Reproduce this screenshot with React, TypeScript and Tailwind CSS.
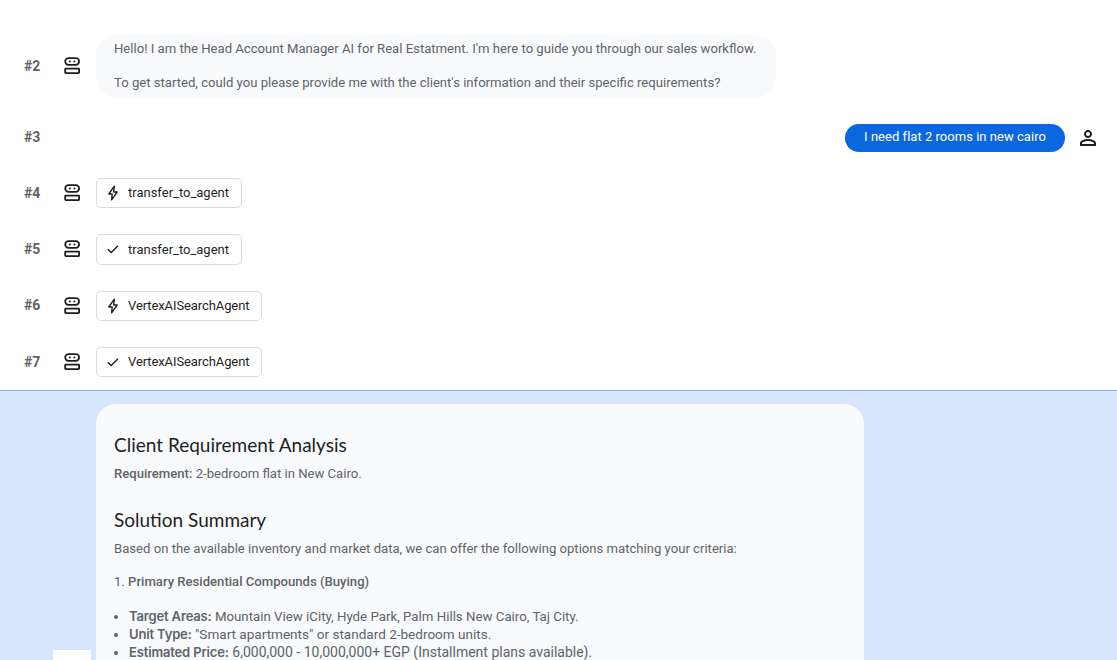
const BotIcon = () => (
  <svg width="24" height="24" viewBox="0 0 24 24" fill="none" stroke="#1f1f1f" strokeWidth="1.8">
    <rect x="5.2" y="4.2" width="13.9" height="6.6" rx="3.3" />
    <rect x="5.2" y="14.6" width="13.9" height="4.5" rx="0.5" />
    <circle cx="9.9" cy="7.5" r="1" fill="#1f1f1f" stroke="none" />
    <circle cx="14.4" cy="7.5" r="1" fill="#1f1f1f" stroke="none" />
  </svg>
);

const UserIcon = () => (
  <svg width="24" height="24" viewBox="0 0 24 24" fill="#1f1f1f">
    <path d="M12 6c1.1 0 2 .9 2 2s-.9 2-2 2-2-.9-2-2 .9-2 2-2m0 9c2.7 0 5.8 1.29 6 2v1H6v-.99c.2-.72 3.3-2.01 6-2.01M12 4C9.79 4 8 5.79 8 8s1.79 4 4 4 4-1.79 4-4-1.79-4-4-4zm0 9c-2.67 0-8 1.34-8 4v3h16v-3c0-2.66-5.33-4-8-4z" />
  </svg>
);

const BoltIcon = () => (
  <svg width="16" height="16" viewBox="0 0 16 16" fill="none" stroke="#1f1f1f" strokeWidth="1.4" strokeLinejoin="round">
    <path d="M9.3 1.2 3.8 9h3.4l-.6 5.8L12.2 7H8.7z" />
  </svg>
);

const CheckIcon = () => (
  <svg width="16" height="16" viewBox="0 0 16 16" fill="none" stroke="#1f1f1f" strokeWidth="1.4">
    <path d="M2.8 8.2 6.2 11.6 13 4.8" />
  </svg>
);

const Chip = ({ done, label, className }: { done?: boolean; label: string; className: string }) => (
  <div className={`flex h-[30.33px] items-center gap-[7px] rounded-[5px] border border-[#dadce0] bg-white pl-2 text-[13px] font-[450] text-[#1f1f1f] ${className}`}>
    {done ? <CheckIcon /> : <BoltIcon />}
    <span>{label}</span>
  </div>
);

const Row = ({ index, children, bot = true, last }: { index: string; children?: React.ReactNode; bot?: boolean; last?: boolean }) => (
  <div className={`flex items-center pt-[13px] pl-6 pr-[17px] ${last ? 'pb-[14px]' : 'pb-[13px]'}`}>
    <span className={`w-[36px] text-[14px] font-bold text-[#5f6368] ${bot ? '' : 'pb-[2px]'}`}>{index}</span>
    <div className="flex w-[36px] shrink-0 justify-start">{bot && <BotIcon />}</div>
    {children}
  </div>
);

export default function App() {
  return (
    <div className="h-[660px] overflow-hidden bg-white font-['Roboto',sans-serif]">
      <div className="pt-[22px]">
        <Row index="#2" last>
          <div className="h-[62px] w-[680px] rounded-[20px] bg-[#f8fafc] px-[18px] pt-[5px] text-[13.12px] leading-[17px] text-[#5f6368]">
            <p className="pb-[17px]">Hello! I am the Head Account Manager AI for Real Estatment. I'm here to guide you through our sales workflow.</p>
            <p>To get started, could you please provide me with the client's information and their specific requirements?</p>
          </div>
        </Row>
        <Row index="#3" bot={false}>
          <div className="ml-auto flex items-center gap-[11px]">
            <div className="flex h-[28px] w-[220px] items-center justify-center rounded-[14px] bg-[#0b67e0] pb-[2px] text-[13px] font-[450] tracking-[0.03px] text-white">
              I need flat 2 rooms in new cairo
            </div>
            <UserIcon />
          </div>
        </Row>
        <Row index="#4"><Chip className="w-[146px]" label="transfer_to_agent" /></Row>
        <Row index="#5"><Chip className="w-[146px]" done label="transfer_to_agent" /></Row>
        <Row index="#6"><Chip className="w-[166px] tracking-[-0.1px]" label="VertexAISearchAgent" /></Row>
        <Row index="#7"><Chip className="w-[166px] tracking-[-0.1px]" done label="VertexAISearchAgent" /></Row>
      </div>
      <div className="relative h-[270px] overflow-hidden border-t border-[#8ab4f8] bg-[#d6e5fc] pl-24 pt-[13px]">
        <div className="absolute bottom-0 left-[53px] h-[10px] w-[38px] bg-white" />
        <div className="h-[400px] w-[768px] rounded-[20px] bg-[#f8fafc] px-[18px] pt-[26px] text-[13.12px] leading-[17px] text-[#5f6368]">
          <h2 className="font-['Lato',sans-serif] text-[19px] leading-[30px] font-normal text-[#1f1f1f]">Client Requirement Analysis</h2>
          <p className="mt-[5px]"><b className="font-medium">Requirement:</b> 2-bedroom flat in New Cairo.</p>
          <h2 className="mt-[23px] font-['Lato',sans-serif] text-[19px] leading-[30px] font-normal text-[#1f1f1f]">Solution Summary</h2>
          <p className="mt-[5px]">Based on the available inventory and market data, we can offer the following options matching your criteria:</p>
          <p className="mt-[16px]">1. <b className="font-medium">Primary Residential Compounds (Buying)</b></p>
          <ul className="mt-[17px] list-disc pl-[15px] leading-[18px]">
            <li className="h-[18px] text-[13.27px]"><b className="font-['Inter',sans-serif] text-[13px] font-semibold tracking-[-0.15px]">Target Areas:</b> Mountain View iCity, Hyde Park, Palm Hills New Cairo, Taj City.</li>
            <li className="h-[18px] text-[13.55px]"><b className="font-['Inter',sans-serif] text-[13px] font-semibold tracking-[-0.15px]">Unit Type:</b> "Smart apartments" or standard 2-bedroom units.</li>
            <li className="h-[18px] text-[14px]"><b className="font-['Inter',sans-serif] text-[13px] font-semibold tracking-[-0.15px]">Estimated Price:</b> 6,000,000 - 10,000,000+ EGP (Installment plans available).</li>
          </ul>
        </div>
      </div>
    </div>
  );
}
